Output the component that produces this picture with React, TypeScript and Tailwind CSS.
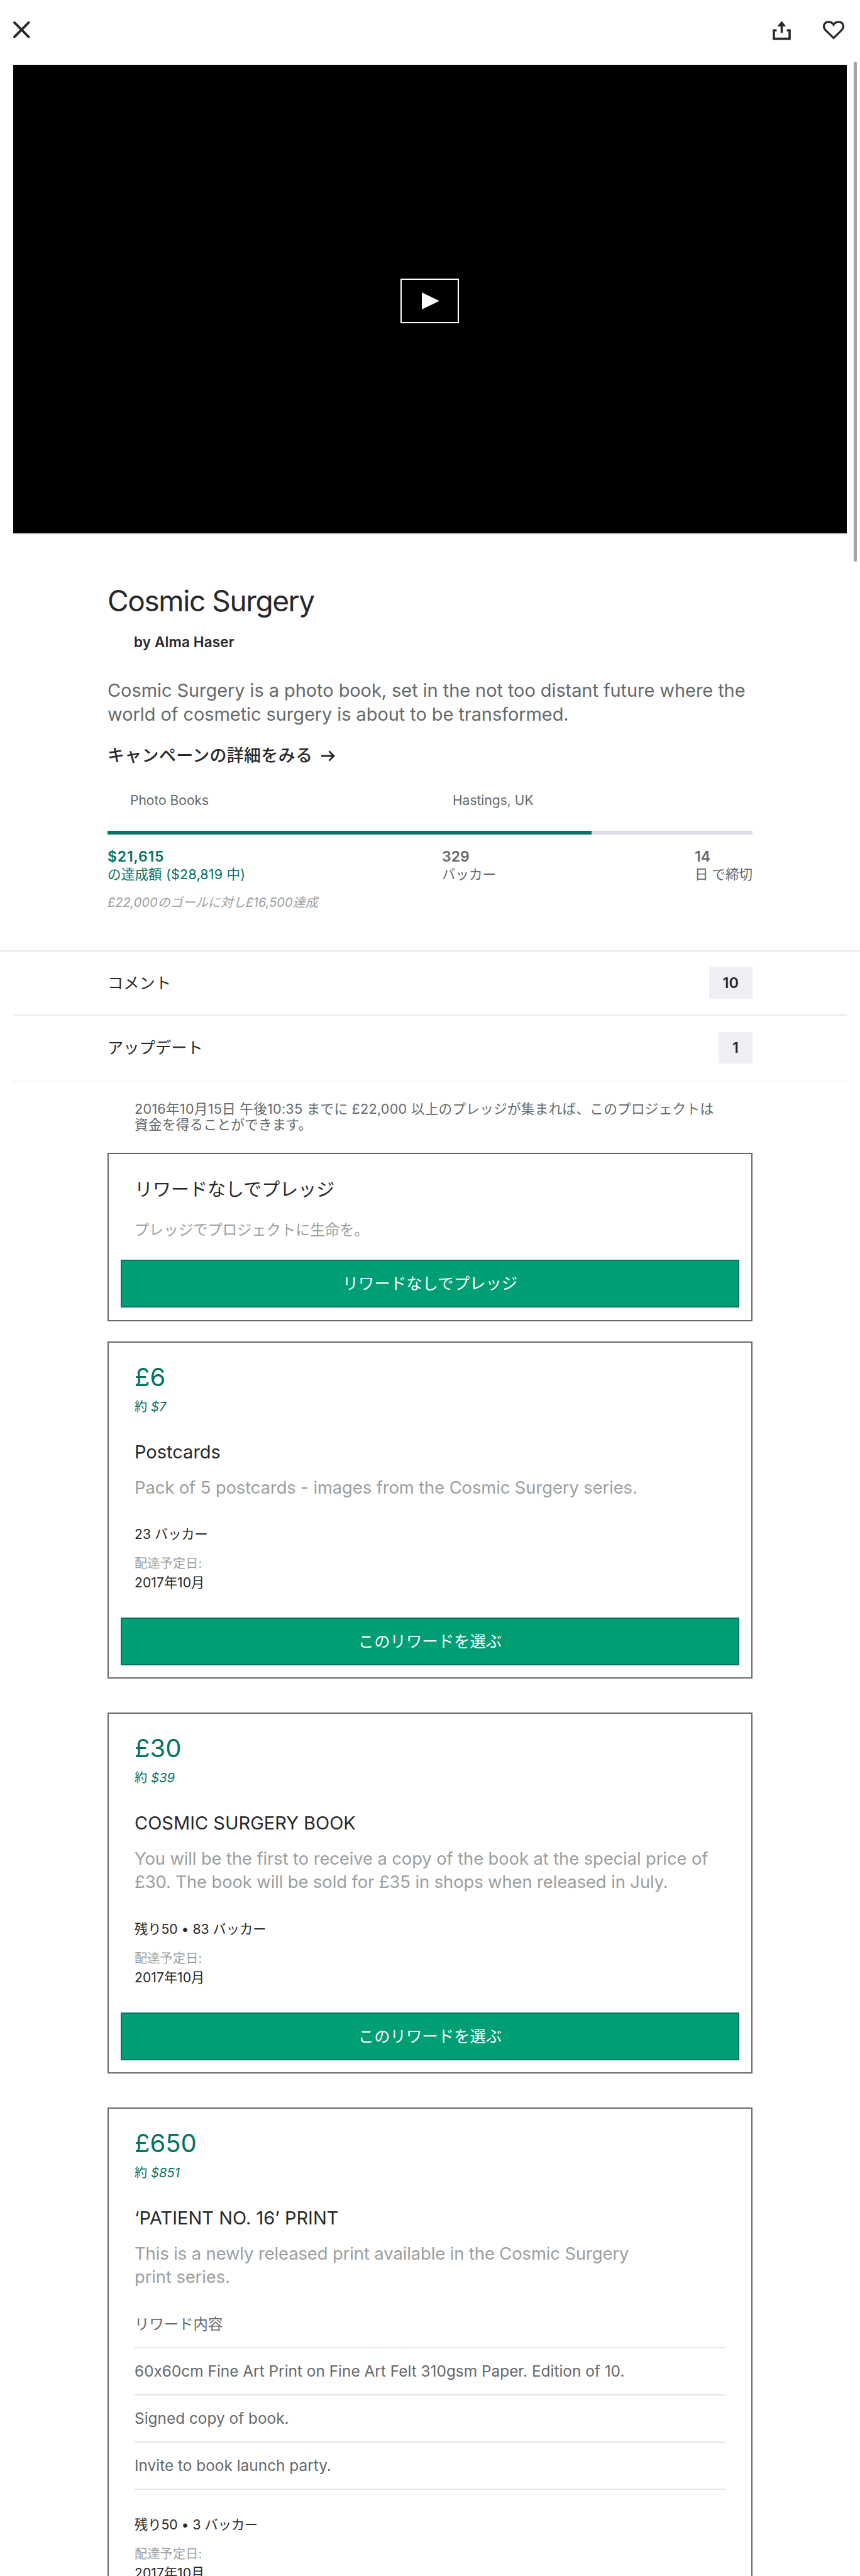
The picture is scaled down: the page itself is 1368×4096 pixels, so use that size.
import type { ReactNode } from "react";

type Reward = {
  price: string;
  about: string;
  title: string;
  lines: string[];
  items?: string[];
  backers: string;
  selectable: boolean;
};

const rewards: Reward[] = [
  {
    price: "£6",
    about: "$7",
    title: "Postcards",
    lines: ["Pack of 5 postcards - images from the Cosmic Surgery series."],
    backers: "23 バッカー",
    selectable: true,
  },
  {
    price: "£30",
    about: "$39",
    title: "COSMIC SURGERY BOOK",
    lines: [
      "You will be the first to receive a copy of the book at the special price of",
      "£30. The book will be sold for £35 in shops when released in July.",
    ],
    backers: "残り50 • 83 バッカー",
    selectable: true,
  },
  {
    price: "£650",
    about: "$851",
    title: "‘PATIENT NO. 16’ PRINT",
    lines: ["This is a newly released print available in the Cosmic Surgery", "print series."],
    items: [
      "60x60cm Fine Art Print on Fine Art Felt 310gsm Paper. Edition of 10.",
      "Signed copy of book.",
      "Invite to book launch party.",
    ],
    backers: "残り50 • 3 バッカー",
    selectable: false,
  },
];

function CloseIcon() {
  return (
    <svg className="mt-[1px] h-[28.5px] w-[28.5px]" viewBox="36 54 96 96" fill="none" stroke="#282828" strokeWidth="13" strokeLinecap="round">
      <path d="M46 64 122 140M122 64 46 140" />
    </svg>
  );
}

function ShareIcon() {
  return (
    <svg className="h-[31px] w-[31px]" viewBox="56 50 104 104" fill="none" stroke="#282828" strokeWidth="12">
      <path d="M81 101H66V146H150V101H135" />
      <path d="M108 114V72" />
      <path d="M84 80 108 52 131 80Z" fill="#282828" stroke="none" />
    </svg>
  );
}

function HeartIcon() {
  return (
    <svg className="h-[32px] w-[36px]" viewBox="326 48 122 108" fill="none" stroke="#282828" strokeWidth="11">
      <path d="M387 144 345 103C326 84 335 57.5 360 57.5 374 57.5 383 66 387 73 391 66 400 57.5 414 57.5 439 57.5 448 84 429 103Z" />
    </svg>
  );
}

function ArrowIcon() {
  return (
    <svg className="h-[18px] w-[22px]" viewBox="0 0 22 18" fill="none" stroke="#282828" strokeWidth="2.8">
      <path d="M0 9H20M12.5 1.5 20 9 12.5 16.5" />
    </svg>
  );
}

function CountRow({ label, count, className }: { label: string; count: string; className: string }) {
  return (
    <div className={`mx-[171px] flex shrink-0 items-center justify-between text-[#282828] ${className}`}>
      <span className="text-[25.3px] leading-[36px]">{label}</span>
      <span className="flex h-[50px] items-center bg-[#efeff4] px-[22px] text-[23.5px] font-semibold">{count}</span>
    </div>
  );
}

function PledgeButton({ children }: { children: ReactNode }) {
  return (
    <button className="mx-[19px] flex h-[76.5px] shrink-0 items-center justify-center border-2 border-[#037362] bg-[#009e74] text-[25.4px] text-white">
      {children}
    </button>
  );
}

function RewardCard({ reward }: { reward: Reward }) {
  return (
    <section className="flex shrink-0 flex-col border-2 border-[#656969] pb-[19px]">
      <div className="flex flex-col items-start px-[41px]">
        <p className="mt-[31px] text-[40px] leading-[48px] text-[#037362]">{reward.price}</p>
        <p className="mt-[9px] text-[20.3px] leading-[28px] text-[#037362]">
          約 <i>{reward.about}</i>
        </p>
        <h3 className="mt-[38px] text-[29px] leading-[40px] text-[#282828]">{reward.title}</h3>
        <p className="mt-[18px] text-[27.4px] leading-[37.4px] tracking-[-0.1px] whitespace-nowrap text-[#9b9e9e]">
          {reward.lines.map((line) => (
            <span key={line} className="block">
              {line}
            </span>
          ))}
        </p>
        {reward.items && (
          <div className="mt-[40.4px] w-full text-[#656969]">
            <p className="h-[54.3px] border-b-2 border-[#e6e6e6] text-[23.4px] leading-[32px]">リワード内容</p>
            {reward.items.map((item) => (
              <p key={item} className="flex h-[74.8px] items-center border-b-2 border-[#e6e6e6] text-[24.4px]">
                {item}
              </p>
            ))}
          </div>
        )}
        <p className="mt-[41px] text-[21.2px] leading-[28px] text-[#282828]">{reward.backers}</p>
        <p className="mt-[19px] text-[20px] leading-[28px] tracking-[0.3px] text-[#9b9e9e]">配達予定日:</p>
        <p className="mt-[2px] mb-[42px] text-[21.2px] leading-[28px] text-[#282828]">2017年10月</p>
      </div>
      {reward.selectable && <PledgeButton>このリワードを選ぶ</PledgeButton>}
    </section>
  );
}

export default function App() {
  return (
    <div className="relative flex h-[4096px] w-[1368px] flex-col overflow-hidden bg-white font-['Inter','Noto_Sans_CJK_JP',sans-serif] [font-feature-settings:'calt'_0]">
      <header className="flex h-[103.3px] shrink-0 items-start justify-between pt-[32px] pr-[24px] pl-[20px]">
        <CloseIcon />
        <div className="flex items-center gap-[49px]">
          <ShareIcon />
          <HeartIcon />
        </div>
      </header>

      <div className="ml-[21.4px] flex h-[747px] w-[1325.2px] shrink-0 items-center justify-center border-b-2 border-[#e5e5e5] bg-black pt-[5px]">
        <div className="flex h-[71px] w-[93px] items-center justify-center border-2 border-white">
          <svg className="ml-[2px] h-[27px] w-[28px]" viewBox="0 0 28 27" fill="#fff">
            <path d="M0 0 28 13.5 0 27Z" />
          </svg>
        </div>
      </div>
      <div className="absolute top-[98px] right-[5px] h-[795px] w-[5px] rounded-full bg-[#a5a5a5]" />

      <div className="flex shrink-0 flex-col px-[171px] pb-[62.5px]">
        <h1 className="mt-[76.4px] text-[46px] leading-[56px] tracking-[-1.4px] text-[#282828]">Cosmic Surgery</h1>
        <p className="mt-[24.3px] pl-[42px] text-[22.5px] leading-[28px] font-semibold tracking-[0.15px] text-[#282828]">by Alma Haser</p>
        <p className="mt-[43.6px] text-[29px] leading-[38.7px] tracking-[-0.08px] whitespace-nowrap text-[#656969]">
          Cosmic Surgery is a photo book, set in the not too distant future where the
          <br />
          world of cosmetic surgery is about to be transformed.
        </p>
        <div className="mt-[28.5px] flex h-[36px] items-center gap-[14px] text-[27px] leading-[36px] font-medium tracking-[0.3px] text-[#282828]">
          キャンペーンの詳細をみる
          <ArrowIcon />
        </div>
        <div className="mt-[38.3px] grid grid-cols-2 text-[21px] leading-[28px] text-[#656969]">
          <span className="pl-[36px]">Photo Books</span>
          <span className="pl-[36px]">Hastings, UK</span>
        </div>
        <div className="mt-[34.5px] h-[5.3px] bg-[#dcdee8]">
          <div className="h-full w-3/4 bg-[#037362]" />
        </div>
        <div className="mt-[21px] flex justify-between text-[21.5px] leading-[28px] text-[#656969]">
          <div className="w-[532px] text-[#037362]">
            <p className="text-[23px] font-semibold tracking-[0.8px]">$21,615</p>
            <p className="tracking-[0.2px]">の達成額 ($28,819 中)</p>
          </div>
          <div className="grow">
            <p className="text-[23px] font-semibold">329</p>
            <p>バッカー</p>
          </div>
          <div>
            <p className="text-[23px] font-semibold">14</p>
            <p>日 で締切</p>
          </div>
        </div>
        <p className="mt-[17px] text-[20px] leading-[28px] text-[#9b9e9e] italic">£22,000のゴールに対し£16,500達成</p>
      </div>

      <div className="h-[2px] shrink-0 bg-[#e8e8e8]" />
      <CountRow label="コメント" count="10" className="h-[99.5px]" />
      <div className="mx-[21.4px] h-[2px] shrink-0 bg-[#e8e8e8]" />
      <CountRow label="アップデート" count="1" className="h-[103px]" />
      <div className="mx-[21.4px] h-[2px] shrink-0 bg-[#f6f6f6]" />

      <main className="mx-[171px] flex shrink-0 flex-col">
        <p className="mt-[31px] px-[43px] text-[21.7px] leading-[25px] tracking-[0.2px] whitespace-nowrap text-[#656969]">
          2016年10月15日 午後10:35 までに £22,000 以上のプレッジが集まれば、このプロジェクトは
          <br />
          資金を得ることができます。
        </p>

        <section className="mt-[32px] flex h-[268px] flex-col border-2 border-[#656969]">
          <h2 className="mt-[37px] px-[41px] text-[29px] leading-[40px] text-[#282828]">リワードなしでプレッジ</h2>
          <p className="mt-[28px] mb-[31px] px-[41px] text-[23.3px] leading-[32px] text-[#9b9e9e]">プレッジでプロジェクトに生命を。</p>
          <PledgeButton>リワードなしでプレッジ</PledgeButton>
        </section>

        <div className="mt-[32px] flex flex-col gap-[53.5px]">
          {rewards.map((reward) => (
            <RewardCard key={reward.price} reward={reward} />
          ))}
        </div>
      </main>
    </div>
  );
}
